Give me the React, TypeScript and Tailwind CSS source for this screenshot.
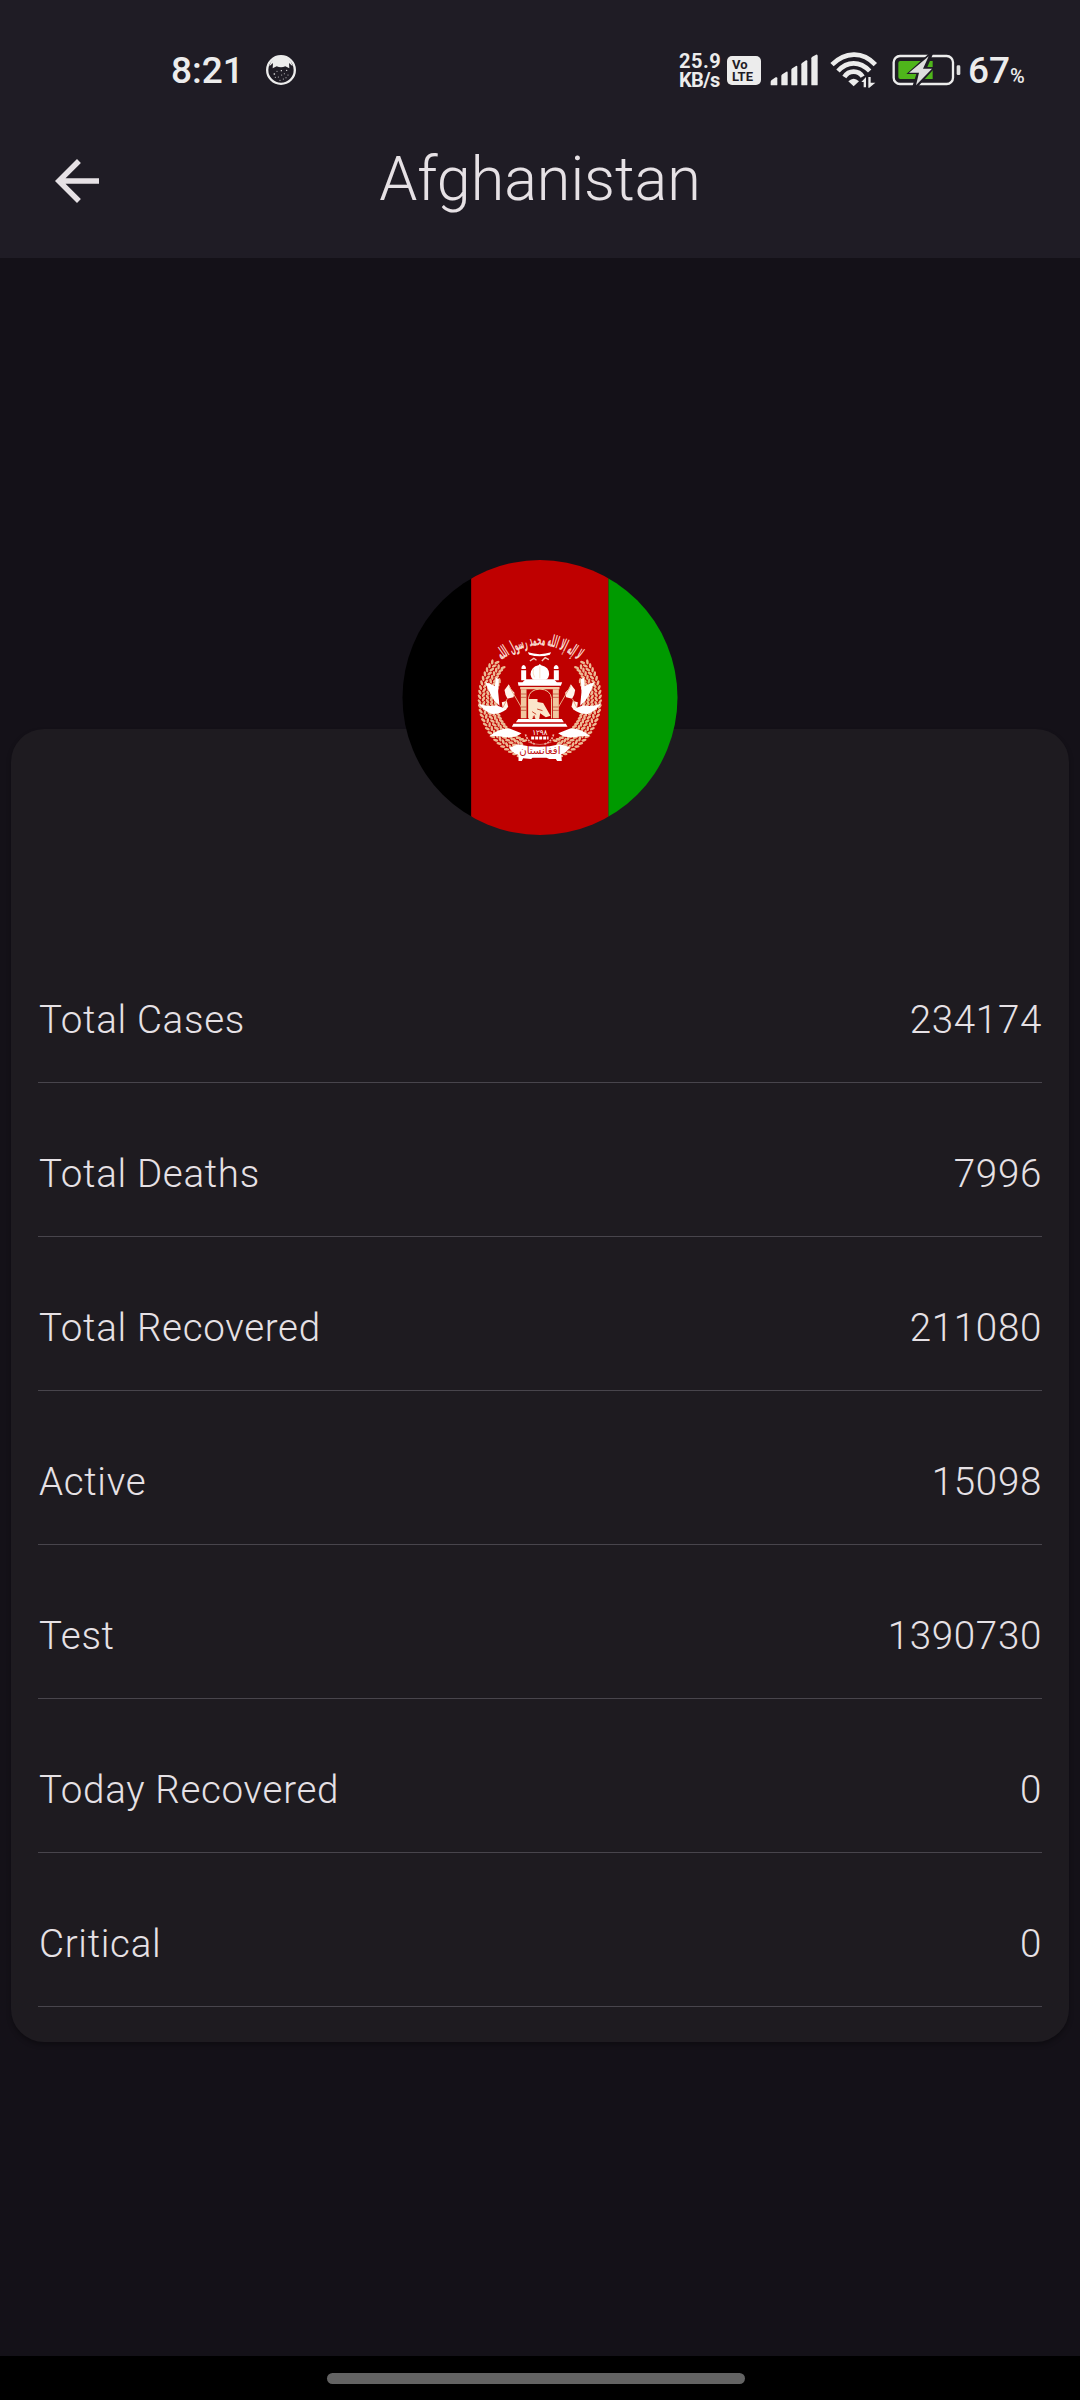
const rows: [string, string][] = [
  ['Total Cases', '234174'],
  ['Total Deaths', '7996'],
  ['Total Recovered', '211080'],
  ['Active', '15098'],
  ['Test', '1390730'],
  ['Today Recovered', '0'],
  ['Critical', '0'],
];

function FaceIcon() {
  return (
    <svg className="ml-[27px] size-[30px]" viewBox="0 0 90 90">
      <circle cx="45" cy="45" r="41.500" fill="none" stroke="#ececec" strokeWidth="7" />
      <path d="M10 34Q18 3 45 3T80 34L69 24L70 40L58 34Q45 40 32 34L20 40L21 24Z" fill="#ececec" />
      <g fill="#ececec">
        <circle cx="25" cy="57" r="2.500" /><circle cx="46" cy="47" r="2" /><circle cx="62" cy="46" r="2" />
        <circle cx="55" cy="56" r="1.500" /><circle cx="37" cy="66" r="1.500" /><circle cx="52" cy="72" r="1.500" />
        <circle cx="66" cy="60" r="1.500" /><circle cx="42" cy="76" r="1.500" /><circle cx="33" cy="49" r="1.500" />
        <circle cx="60" cy="68" r="1.500" /><circle cx="28" cy="67" r="1.500" /><circle cx="47" cy="60" r="1.500" />
      </g>
    </svg>
  );
}

function SignalIcon() {
  return (
    <svg className="ml-[9px] h-[32px] w-[48px]" viewBox="0 0 144 96" fill="#ececec">
      <path d="M2 92V83Q2 80 5 78L17 70Q22 68 22 73V92Q22 94 19 94H4Q2 94 2 92Z" />
      <path d="M34 92V66Q34 63 37 61L49 53Q53 51 53 56V92Q53 94 50 94H36Q34 94 34 92Z" />
      <path d="M64 92V48Q64 45 67 43L78 36Q82 34 82 39V92Q82 94 79 94H66Q64 94 64 92Z" />
      <path d="M94 92V31Q94 28 97 26L108 19Q112 17 112 22V92Q112 94 109 94H96Q94 94 94 92Z" />
      <path d="M124 92V13Q124 10 127 8L138 2Q143 0 143 6V92Q143 94 140 94H126Q124 94 124 92Z" />
    </svg>
  );
}

function WifiIcon() {
  return (
    <svg className="ml-[12px] h-[36px] w-[48px]" viewBox="0 0 144 108">
      <g fill="none" stroke="#ececec" strokeWidth="14">
        <path d="M6 38Q35 9 71 8T136 38" />
        <path d="M24 57Q45 34 71 34T119 57" />
        <path d="M43 75Q53 59 71 59T98 74" />
      </g>
      <path d="M55 88Q71 72 87 88L71 103Z" fill="#ececec" />
      <path d="M94 90L108 75V106H101V90ZM115 75H122V92H136L118 107H115Z" fill="#ececec" />
    </svg>
  );
}

function BatteryIcon() {
  return (
    <svg className="ml-[13px] h-[34px] w-[70px]" viewBox="0 0 210 102">
      <rect x="8" y="9" width="178" height="84" rx="19" fill="none" stroke="#ececec" strokeWidth="7" />
      <path d="M28 24H125V78H28Q22 78 22 72V30Q22 24 28 24Z" fill="#4fb51b" />
      <path d="M118 -2L46 63H76L63 104H78L134 42H109L128 -2Z" fill="#1f1c25" />
      <path d="M113 10L54 59H84L75 97L123 47H96Z" fill="#dedede" />
      <rect x="197" y="37" width="11" height="29" rx="4" fill="#dedede" />
    </svg>
  );
}

/* One half of the wheat wreath; the other half is its mirror image. */
function WreathHalf() {
  const grains = [];
  for (let ring = 0; ring < 5; ring++) {
    const radius = 181 - ring * 12;
    for (let deg = 110; deg <= 218; deg += 4.500) {
      if (ring === 4 && deg > 205) continue;
      const a = ((deg + (ring % 2) * 2.5) * Math.PI) / 180;
      const x = 450 + radius * Math.cos(a);
      const y = 462 + radius * Math.sin(a);
      const tilt = deg + 90 + (ring % 2 ? 32 : -32);
      grains.push(
        <ellipse key={ring + '-' + deg} cx={x} cy={y} rx="8" ry="3.900" transform={`rotate(${tilt} ${x} ${y})`} />,
      );
    }
  }
  return (
    <g>
      <g fill="#edba94">{grains}</g>
      <g fill="#fff">
        <path d="M286 412L304 418L315 424L318 398L327 402L325 440L329 482Q312 468 304 452Z" />
        <path d="M265 473Q288 487 319 481L350 492Q335 507 306 507Q278 495 265 473Z" />
        <path d="M298 574Q330 548 361 551L395 565Q377 580 341 576Q316 572 298 574Z" />
      </g>
      <g fill="#fff5ea">
        <path d="M344 435L357 418L364 433L374 443L371 457L353 461L347 449Z" />
        <path d="M336 472L351 468L355 485L347 496L338 486Z" />
      </g>
      <path d="M358 424L398 493M352 462L340 486" stroke="#e8aa83" strokeWidth="3" fill="none" />
    </g>
  );
}

function Emblem() {
  return (
    <g>
      <WreathHalf />
      <g transform="matrix(-1 0 0 1 900 0)"><WreathHalf /></g>

      <path id="arc" d="M328 352Q450 250 572 352" fill="none" />
      <text fill="#f8d9cf" fontSize="50" fontFamily="DejaVu Sans, sans-serif" fontWeight="bold" textAnchor="middle">
        <textPath href="#arc" startOffset="50%" textLength="250" lengthAdjust="spacingAndGlyphs">لا إله إلا الله محمد رسول الله</textPath>
      </text>
      <path d="M414 322Q450 333 484 322L480 329Q450 338 418 329Z" fill="#fff" />
      <path d="M420 348L432 340L440 346M456 348L466 338L477 344" stroke="#f6c9bd" strokeWidth="4" fill="none" />

      <g fill="#fff">
        <path d="M450 357L454 361Q478 366 478 388Q476 402 468 404H432Q424 402 422 388Q424 365 446 361Z" />
        <path d="M395 366Q401 354 408 366V372H395ZM492 366Q499 354 506 366V372H492Z" />
        <path d="M394 376H409V406H394ZM492 376H507V406H492Z" />
        <path d="M407 403H492L501 412H517L513 422H386L384 412H398Z" />
        <path d="M385 522H516L522 532H378ZM371 536H528L533 545H366Z" />
      </g>
      <path d="M391 426H509V433H391Z" fill="#f3cba6" />
      <path d="M393 433H410V520H393ZM489 433H507V520H489Z" fill="#f0c8a0" />
      <path d="M393 447H410M393 457H410M393 486H410M393 496H410M489 447H507M489 457H507M489 486H507M489 496H507" stroke="#b93a27" strokeWidth="2" />
      <path d="M416 520V460Q418 434 450 432Q482 434 485 460V520" fill="none" stroke="#f0c8a0" strokeWidth="3" />
      <path d="M417 462H443V471L460 474L482 512L468 517L451 505L448 523H437L433 510L426 524H417Z" fill="#fbe6cb" />
      <path d="M427 500L439 508M442 492L458 497M429 516L436 519" stroke="#c9442c" strokeWidth="3" />
      <path d="M431 371Q427 384 434 397M450 364V400" stroke="#f2d1ad" strokeWidth="2" fill="none" />

      <text x="450" y="569" textAnchor="middle" fill="#fff" fontSize="22" fontFamily="DejaVu Sans, sans-serif" textLength="45">۱۲۹۸</text>
      <path d="M407 568Q412 590 438 598M491 568Q487 590 462 598" stroke="#eeb1a0" strokeWidth="5" strokeDasharray="6 3" fill="none" />
      <path d="M424 579H476" stroke="#fff" strokeWidth="9" strokeDasharray="9 3" />
      <path d="M415 591Q450 606 485 591" stroke="#e59b8b" strokeWidth="2" fill="none" />

      <path d="M384 598Q450 613 510 598L540 606Q528 626 514 628L516 648H502L498 642H478L470 638H428L424 642L400 640L396 648H386V630Q366 622 358 608Z" fill="#fff" />
      <text x="450" y="626" textAnchor="middle" fill="#bf1717" fontSize="31" fontFamily="DejaVu Sans, sans-serif" textLength="124" lengthAdjust="spacingAndGlyphs">افغانستان</text>
    </g>
  );
}

function Flag() {
  return (
    <svg className="absolute left-1/2 top-[-169px] size-[275px] -translate-x-1/2 rounded-full" viewBox="38 45 825 825">
      <rect x="30" y="40" width="215" height="840" fill="#000" />
      <rect x="244" y="40" width="412" height="840" fill="#bf0000" />
      <rect x="656" y="40" width="214" height="840" fill="#009a00" />
      <Emblem />
    </svg>
  );
}

export default function App() {
  return (
    <div className="flex h-[2400px] w-[1080px] flex-col overflow-hidden bg-[#141118] font-[Roboto,sans-serif] text-[#e6e1e5]">
      <header className="h-[258px] bg-[#1f1c25]">
        <div className="flex h-[140px] items-center pl-[171px] text-[#ececec]">
          <span className="w-[68px] pt-px text-[37px] font-medium leading-[44px] whitespace-nowrap">8:21</span>
          <FaceIcon />
          <div className="ml-[383px] flex w-[41px] flex-col pt-[2px] text-[20px] font-bold leading-[19px] whitespace-nowrap">
            <span className="tracking-[0.500px]">25.9</span>
            <span className="tracking-[-0.600px]">KB/s</span>
          </div>
          <div className="ml-[7px] flex h-[29px] w-[34px] flex-col rounded-[5px] bg-[#ececec] pt-[3px] pl-[5px] text-[13px] font-bold leading-[12px] text-[#1f1c25]">
            <span>Vo</span>
            <span>LTE</span>
          </div>
          <SignalIcon />
          <WifiIcon />
          <BatteryIcon />
          <span className="ml-[7px] w-[41px] pt-px text-[37px] font-medium leading-[44px] whitespace-nowrap">67</span>
          <span className="ml-px pt-[11px] text-[20px] font-medium leading-[24px]">%</span>
        </div>
        <div className="grid h-[82px] grid-cols-[1fr_auto_1fr] items-center pl-[44px] pr-[44px]">
          <svg className="size-[66px]" viewBox="0 0 24 24" fill="#e6e1e5">
            <path d="M20 11H7.830l5.590-5.590L12 4l-8 8 8 8 1.410-1.410L7.830 13H20v-2z" />
          </svg>
          <h1 className="pb-[4px] text-[61px] font-light leading-[76px]">Afghanistan</h1>
        </div>
      </header>

      <main className="flex-1 px-[11px] pt-[471px]">
        <section className="relative h-[1313px] rounded-[33px] bg-[#1e1b20] px-[27px] pt-[200px] shadow-[0_3px_5px_rgba(0,0,0,0.3)]">
          <Flag />
          {rows.map(([label, value]) => (
            <div key={label} className="flex h-[154px] items-end justify-between border-b border-[#48454c] pb-[39px] text-[38.500px] font-light leading-[46px] tracking-[0.690px]">
              <span className="pl-px">{label}</span>
              <span>{value}</span>
            </div>
          ))}
        </section>
      </main>

      <footer className="flex h-[44px] justify-center bg-black pt-[17px] pr-[8px]">
        <div className="h-[11px] w-[418px] rounded-full bg-[#636363]" />
      </footer>
    </div>
  );
}
